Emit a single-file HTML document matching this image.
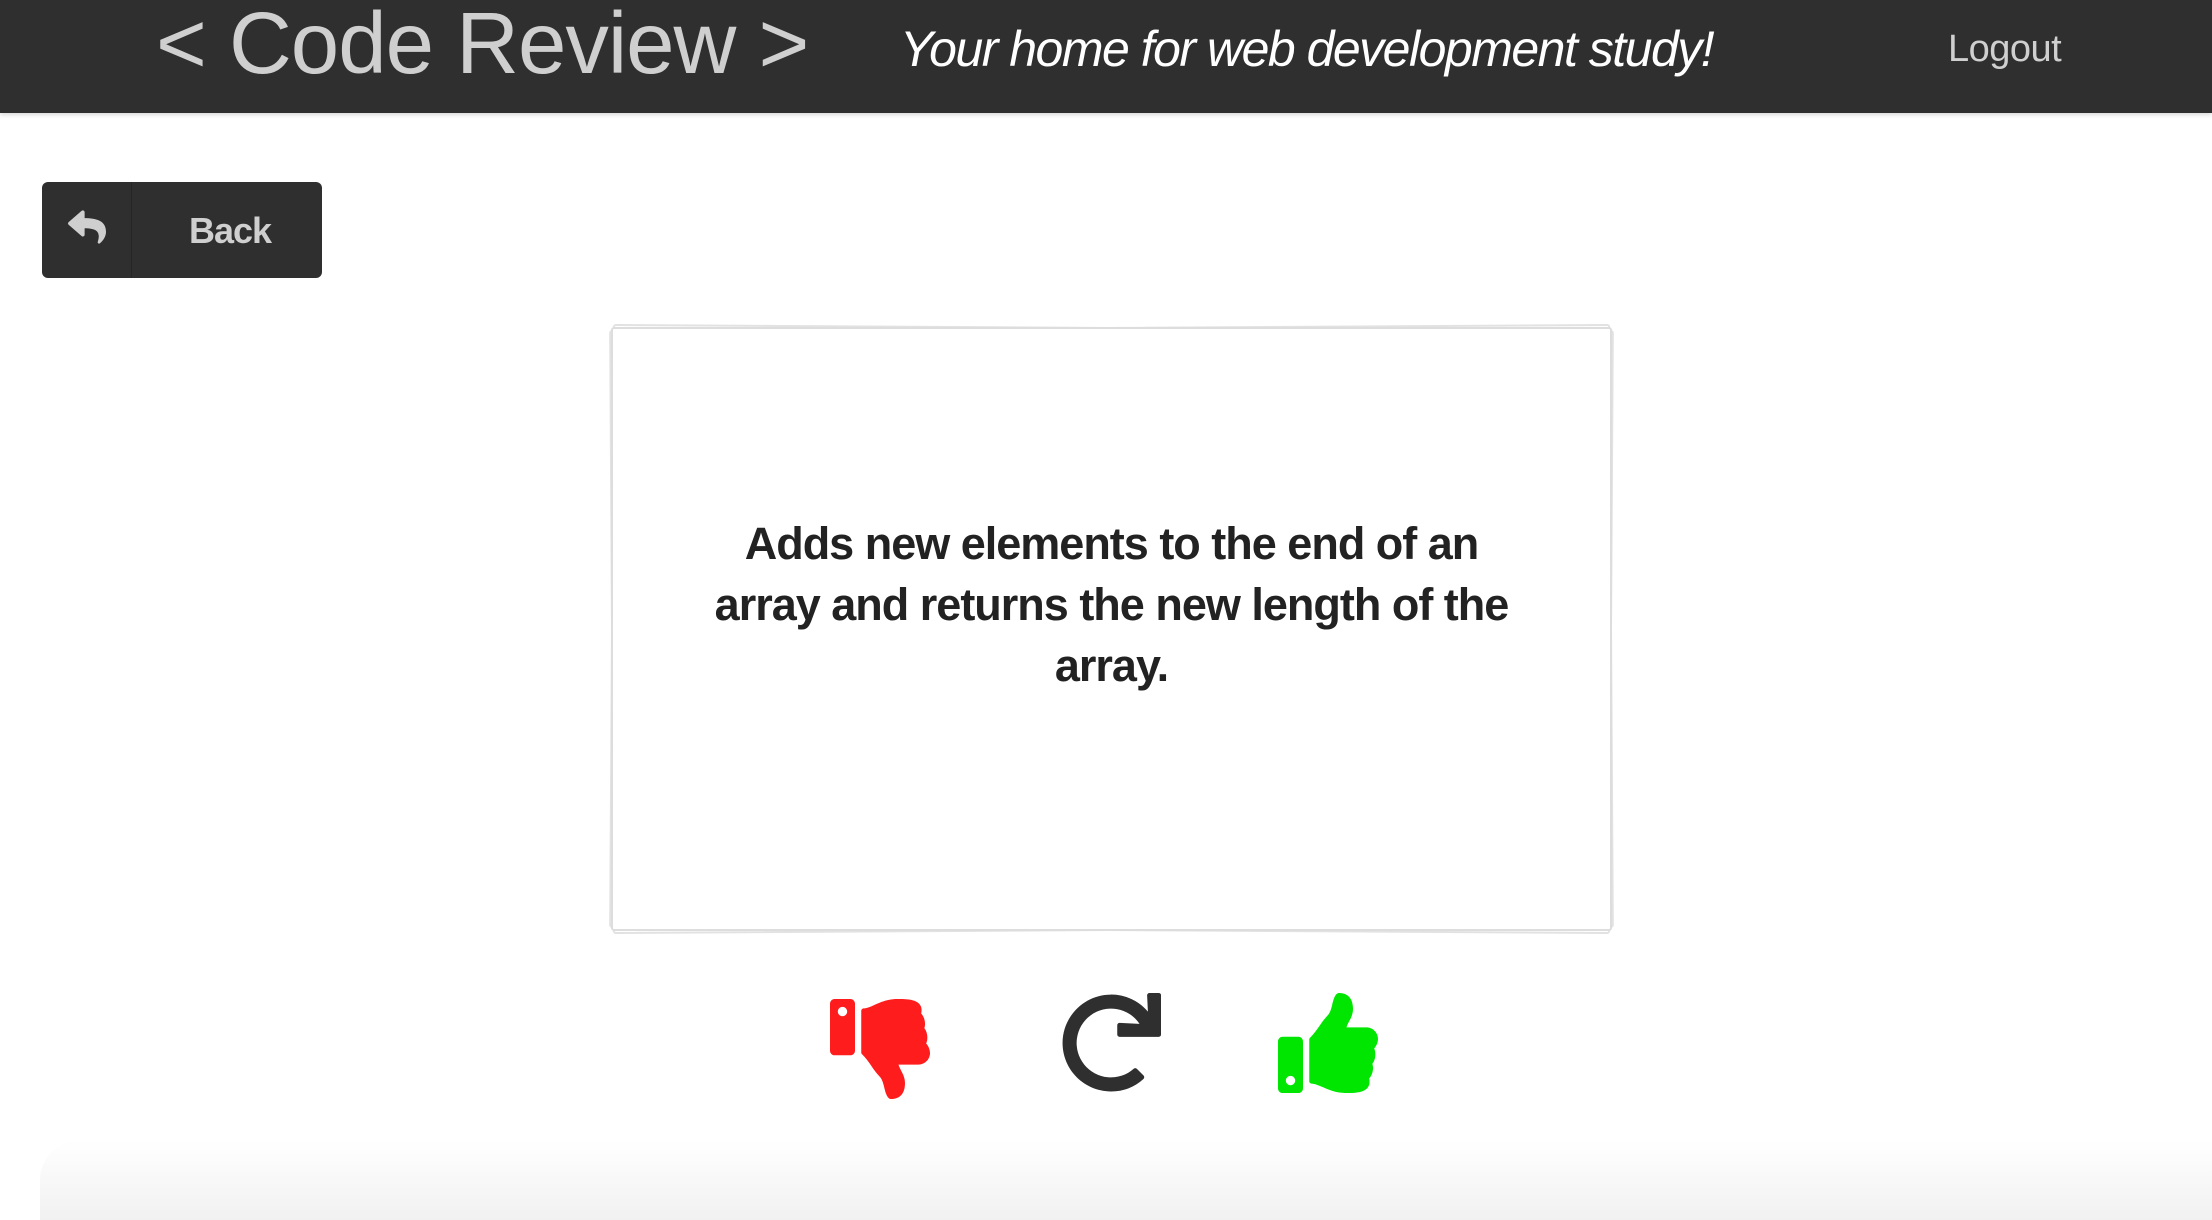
<!DOCTYPE html>
<html><head><meta charset="utf-8"><style>
*{margin:0;padding:0;box-sizing:border-box}
html,body{width:2212px;height:1196px;overflow:hidden;background:#fff;font-family:"Liberation Sans",sans-serif}
.hdr{position:absolute;left:0;top:0;width:2212px;height:113px;background:#2f2f2f;box-shadow:0 2px 4px rgba(0,0,0,.15)}
.title{position:absolute;left:156px;top:-6px;font-size:87px;color:#cfcfcf;white-space:nowrap;letter-spacing:-1px}
.tag{position:absolute;left:900px;top:20px;font-size:50px;color:#fff;font-style:italic;white-space:nowrap;letter-spacing:-1.5px}
.logout{position:absolute;left:1948px;top:28px;font-size:38px;color:#cfcfcf;letter-spacing:-0.5px}
.back{position:absolute;left:42px;top:182px;width:280px;height:96px;background:#2f2f2f;border-radius:6px}
.back .div{position:absolute;left:89px;top:0;width:1px;height:96px;background:#262626}
.back span{position:absolute;left:147px;top:28px;font-size:36px;font-weight:bold;color:#cfcfcf;letter-spacing:-1px}
.card{position:absolute;left:611px;top:327px;width:1001px;height:604px;background:#fff;border:2px solid #ddd;border-radius:3px}
.layer{position:absolute;left:611px;top:327px;width:1001px;height:604px;background:#fff;border:2px solid #e2e2e2;border-radius:3px}
.l1{transform:rotate(0.35deg)}
.l2{transform:rotate(-0.35deg)}
.txt{position:absolute;left:0;right:0;top:184px;text-align:center;font-size:45px;font-weight:bold;color:#222;line-height:61px;padding:0 80px;letter-spacing:-1px}
.foot{position:absolute;left:40px;top:1140px;width:2200px;height:80px;background:linear-gradient(#fff,#f1f1f1);border-radius:40px 0 0 0}
svg{position:absolute}
</style></head><body>
<div class="hdr">
<div class="title">&lt; Code Review &gt;</div>
<div class="tag">Your home for web development study!</div>
<div class="logout">Logout</div>
</div>
<div class="back"><div class="div"></div>
<svg style="left:26px;top:26px" width="38" height="38" viewBox="0 0 512 512"><path fill="#cfcfcf" d="M8.3 189.8L184.3 37.8C199.7 24.5 224 35.3 224 56v80.1C384.6 137.9 512 170.1 512 322.3c0 61.4-39.6 122.3-83.3 154.1-13.7 9.9-33.1-2.5-28.1-18.6 45.3-144.7-21.500-183.1-176.6-185.4V360c0 20.7-24.3 31.5-39.7 18.2l-176-152c-11.1-9.6-11.1-26.8 0-36.4z"/></svg>
<span>Back</span></div>
<div class="layer l1"></div>
<div class="layer l2"></div>
<div class="card"><div class="txt">Adds new elements to the end of an array and returns the new length of the array.</div></div>
<svg style="left:829px;top:999px" width="102" height="100" viewBox="0 0 512 512"><g transform="translate(0,512) scale(1,-1)"><path fill="#ff1c1c" d="M104 224H24c-13.255 0-24 10.745-24 24v240c0 13.255 10.745 24 24 24h80c13.255 0 24-10.745 24-24V248c0-13.255-10.745-24-24-24zM64 472c-13.255 0-24-10.745-24-24s10.745-24 24-24 24 10.745 24 24-10.745 24-24 24zM384 81.452c0 42.416-25.97 66.208-33.277 94.548h101.723c33.397 0 59.397 27.746 59.553 58.098.084 17.938-7.546 37.249-19.439 49.197l-.11.11c9.836 23.337 8.237 56.037-9.308 79.469 8.681 25.895-.069 57.704-16.382 74.757 4.298 17.598 2.244 32.575-6.148 44.632C440.202 511.587 389.616 512 346.839 512l-2.845-.001c-48.287-.017-87.806-17.598-119.560-31.725-15.957-7.099-36.821-15.887-52.651-16.178-6.540-.12-11.783-5.457-11.783-11.998v-213.77c0-3.2 1.282-6.271 3.558-8.521 39.614-39.144 56.648-80.587 89.117-113.111 14.804-14.832 20.188-37.236 25.393-58.902C282.515 39.293 291.817 0 312 0c24 0 72 8 72 81.452z"/></g></svg>
<svg style="left:1061px;top:993px" width="100" height="100" viewBox="0 0 512 512"><path fill="#2f2f2f" d="M500.33 0h-47.41a12 12 0 0 0-12 12.57l4 82.76A247.42 247.42 0 0 0 256 8C119.34 8 7.9 119.53 8 256.19 8.1 393.07 119.1 504 256 504a247.1 247.1 0 0 0 166.18-63.910 12 12 0 0 0 .48-17.43l-34-34a12 12 0 0 0-16.38-.55A176 176 0 1 1 402.1 157.8l-101.53-4.870a12 12 0 0 0-12.57 12v47.41a12 12 0 0 0 12 12h200.33a12 12 0 0 0 12-12V12a12 12 0 0 0-12-12z"/></svg>
<svg style="left:1277px;top:993px" width="102" height="100" viewBox="0 0 512 512"><path fill="#00e600" d="M104 224H24c-13.255 0-24 10.745-24 24v240c0 13.255 10.745 24 24 24h80c13.255 0 24-10.745 24-24V248c0-13.255-10.745-24-24-24zM64 472c-13.255 0-24-10.745-24-24s10.745-24 24-24 24 10.745 24 24-10.745 24-24 24zM384 81.452c0 42.416-25.970 66.208-33.277 94.548h101.723c33.397 0 59.397 27.746 59.553 58.098.084 17.938-7.546 37.249-19.439 49.197l-.11.11c9.836 23.337 8.237 56.037-9.308 79.469 8.681 25.895-.069 57.704-16.382 74.757 4.298 17.598 2.244 32.575-6.148 44.632C440.202 511.587 389.616 512 346.839 512l-2.845-.001c-48.287-.017-87.806-17.598-119.560-31.725-15.957-7.099-36.821-15.887-52.651-16.178-6.540-.12-11.783-5.457-11.783-11.998v-213.77c0-3.2 1.282-6.271 3.558-8.521 39.614-39.144 56.648-80.587 89.117-113.111 14.804-14.832 20.188-37.236 25.393-58.902C282.515 39.293 291.817 0 312 0c24 0 72 8 72 81.452z"/></svg>
<div class="foot"></div>
</body></html>
